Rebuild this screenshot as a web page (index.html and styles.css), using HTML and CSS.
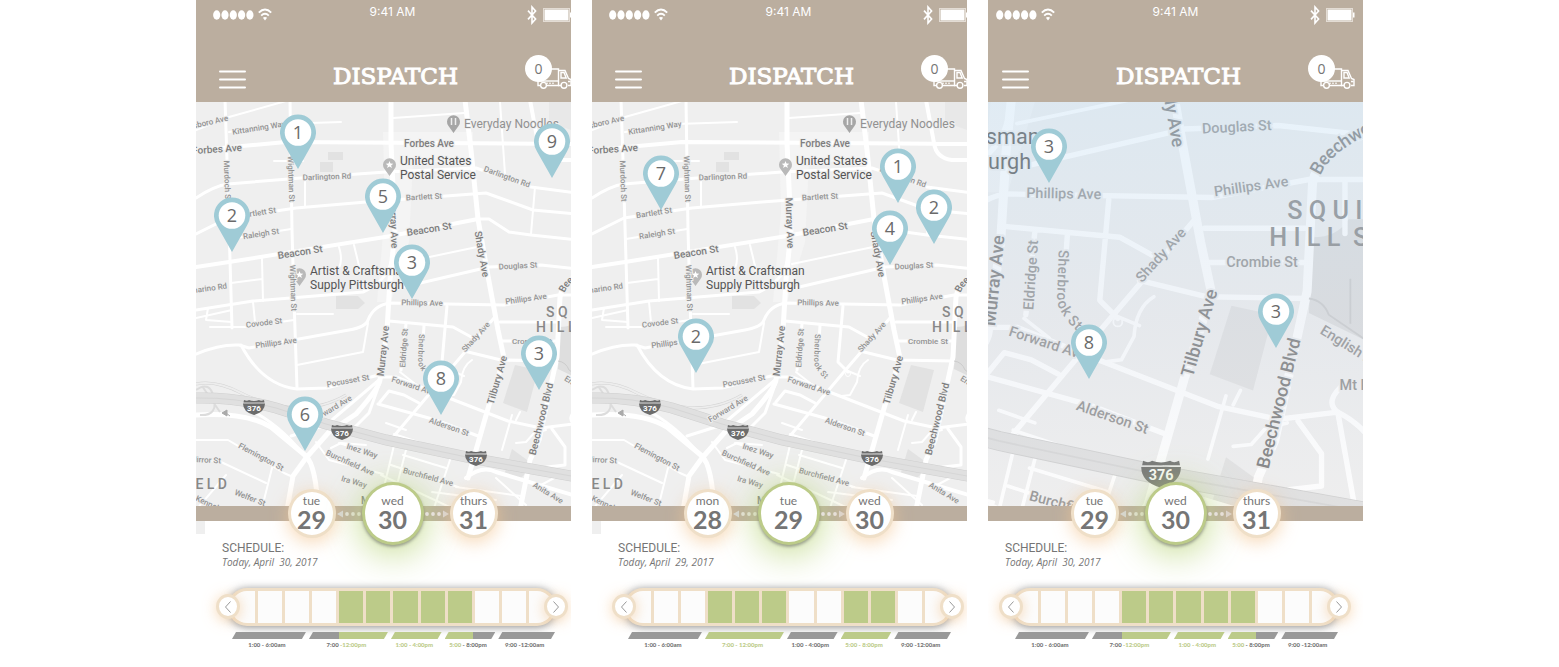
FILE: index.html
```html
<!DOCTYPE html>
<html lang="en">
<head>
<meta charset="utf-8">
<meta name="viewport" content="width=device-width, initial-scale=1">
<title>Dispatch</title>
<link rel="stylesheet" href="styles.css">
</head>
<body>

<!-- Shared icons -->
<svg class="sprite" aria-hidden="true">
  <symbol id="i-signal" viewBox="0 0 41 10"><g fill="#fff"><ellipse cx="3.7" cy="5" rx="3.6" ry="4.7"/><ellipse cx="12" cy="5" rx="3.6" ry="4.7"/><ellipse cx="20.3" cy="5" rx="3.6" ry="4.7"/><ellipse cx="28.6" cy="5" rx="3.6" ry="4.7"/><ellipse cx="36.9" cy="5" rx="3.6" ry="4.7"/></g></symbol>
  <symbol id="i-wifi" viewBox="0 0 14 13"><g fill="none" stroke="#fff" stroke-width="1.9"><path d="M.8 4.6Q7-1.6 13.2 4.6"/><path d="M3.2 7.6Q7 4 10.8 7.6"/></g><path d="M4.900 9.800Q7 8 9.100 9.800L7 12.600z" fill="#fff"/></symbol>
  <symbol id="i-bt" viewBox="0 0 10 20"><path d="M1 5.600L8.600 14 5 18V2l3.600 4L1 14.400" fill="none" stroke="#fff" stroke-width="1.600"/></symbol>
  <symbol id="i-battery" viewBox="0 0 29 14"><rect x=".5" y=".5" width="26" height="13" fill="none" stroke="#e3dcd4"/><rect x="1.5" y="1.5" width="24" height="11" fill="#fff"/><path d="M27 4.500h1.500v5H27z" fill="#fff"/></symbol>
  <symbol id="i-menu" viewBox="0 0 27 19"><path d="M1 1.500h25M1 9.500h25M1 17.500h25" stroke="#fff" stroke-width="2" stroke-linecap="round"/></symbol>
  <symbol id="i-truck" viewBox="0 0 35 21"><g fill="none" stroke="#fff" stroke-width="1.400"><path d="M3 17.500H1V1h20.500v16.500H9.500"/><path d="M1 13h20.500"/><path d="M21.500 2.500h6.500l3.500 8 2.500 1v6h-3"/><path d="M24 4.500h3l2.200 5.500H24z"/><path d="M21 17.500h3M31 13.500h2.500"/><circle cx="6.500" cy="17.300" r="2.900"/><circle cx="27" cy="17.300" r="2.900"/></g><path d="M9 15.200h9" stroke="#fff" stroke-dasharray="2 1"/></symbol>
  <symbol id="i-pin" viewBox="0 0 36 55"><path d="M18 55L3 28.500A18 18 0 1 1 33 28.500z" fill="#9fcbd6"/><circle cx="18" cy="18.500" r="13.300" fill="#fff"/></symbol>
  <symbol id="i-left" viewBox="0 0 24 8"><path d="M0 4l6-3.500v7z" fill="#d9d6d4"/><g fill="#e6e1dc"><circle cx="10" cy="4" r="1.900"/><circle cx="16" cy="4" r="1.900"/><circle cx="22" cy="4" r="1.900"/></g></symbol>
  <symbol id="i-right" viewBox="0 0 24 8"><path d="M24 4l-6-3.500v7z" fill="#d9d6d4"/><g fill="#e6e1dc"><circle cx="2" cy="4" r="1.900"/><circle cx="8" cy="4" r="1.900"/><circle cx="14" cy="4" r="1.900"/></g></symbol>
  <symbol id="i-prev" viewBox="0 0 8 14"><path d="M6.500 1.500L1.500 7l5 5.500" fill="none" stroke="#999"/></symbol>
  <symbol id="i-next" viewBox="0 0 8 14"><path d="M1.500 1.500l5 5.500-5 5.500" fill="none" stroke="#999"/></symbol>
</svg>

<!-- Street map, cloned into every screen with its own view -->
<template id="map-template">
<svg class="map-art" preserveAspectRatio="xMinYMin slice" role="img" aria-label="Street map">
  <rect x="-20" y="90" width="460" height="460" fill="#efefef"/>
  <g fill="#f4f4f4"><path d="M187 132h90v30h-60l-4 80-18 60h-14l8-90z"/></g>
  <g fill="#e2e2e2">
    <path d="M132 152h15v8h-15zM124 162h13v10h-13zM140 296h22l7 7-7 6h-22z"/>
    <path d="M353 102h22v28l-22-8z" fill="#e8e8e8"/>
    <path d="M319 365l23 5-11 42-24-9z"/>
    <path d="M364 327q14 0 20-10h40v70h-25l-37-18z" fill="#dedede"/>
    <path d="M316 449l22 16-14 14-16-4z"/>
  </g>
  <g fill="none" stroke="#fff" stroke-linejoin="round" stroke-linecap="round">
    <g stroke-width="2">
      <path d="M33 132L85 124 145 122M0 130L33 117 90 101M78 161H107M109 179V206M197 118L268 113M304 102L309 174M339 187L335 234M34 239L95 229"/>
      <path d="M143 247Q147 260 143 268M158 245L164 270M200 264L281 247M35 283L66 279M66 259L67 301M0 318L36 310M12 308L10 320 36 322M57 302L59 322M14 327H50L98 320M101 314H137"/>
      <path d="M172 323L167 352 101 365M190 423L210 430M198 434L240 448 262 455M120 442L133 460 187 474M143 443L165 450M200 437L183 508M210 450L195 508M207 455L250 468M195 465L262 487M255 457L238 508"/>
      <path d="M0 440H32L88 473 97 477M0 458L25 462 70 483M76 468L66 508M170 445L145 443 135 448M30 475L0 510M236 492L300 500M260 487L325 496M185 475L260 510"/>
      <path d="M276 360Q266 366 265 382L258 395 250 396M256 371L268 376M316 415L306 450M320 443L330 442 338 433 350 430M204 372L218 383M320 420L324 412M345 485L362 476M300 478L330 505"/>
      <circle cx="256" cy="374" r="2.500" stroke-width="1"/>
    </g>
    <g stroke-width="3">
      <path d="M29 100L31 160 34 260 36 328M94 100L96 230 98 300 101 388"/>
      <path d="M0 198Q18 186 32 184L105 178 190 172 280 168 335 187 380 193M0 234L32 218 100 208 170 202 290 193 337 210 380 214"/>
      <path d="M282 219H293L313 232 335 235 400 242M203 288L293 267 345 265 400 271M0 310L57 301 167 292Q190 282 195 262"/>
      <path d="M0 354Q24 344 43 345L53 348 153 330Q170 327 172 320 178 305 194 303L308 305 362 295H400M382 295V325"/>
      <path d="M45 345Q66 385 101 389L130 388 183 375M193 321L257 327 277 338M268 351L305 360 361 361M251 306L246 362 256 372M298 318L251 373 198 436M210 324L205 370M228 326L227 340M305 341H361M304 322H361"/>
      <path d="M183 377H200L240 393 312 421 345 428 378 424Q400 435 405 460M184 402L193 391 208 395 223 403M182 404L240 420 282 436M378 424Q370 418 382 408M356 429L369 447V465L351 467M378 424L388 480"/>
      <path d="M183 380L130 425 95 436M183 385L173 413 158 428"/>
    </g>
    <g stroke-width="4">
      <path d="M-5 151L46 146 90 142 380 144M334 100L342 143Q344 158 360 160H400M270 478Q286 465 300 472L380 496 400 500"/>
      <path d="M0 267L33 262 195 236 282 219"/>
    </g>
    <g stroke-width="5">
      <path d="M195 100V143L199 230 194 280 191 330 184 380Q183 388 160 414L133 432 110 458 97 476 91 510"/>
      <path d="M269 100L275 150 282 219 292 276 302 330 308 358 293 405 272 478"/>
      <path d="M400 268Q368 276 364 297L361 357 343 440 334 460 324 510"/>
      <path d="M0 415Q50 412 75 427L110 456Q120 466 122 510"/>
      <path d="M60 413Q90 430 113 462" stroke-width="3"/>
    </g>
  </g>
  <g fill="none">
    <path d="M0 384Q20 380 45 393T100 408Q128 408 150 395" stroke="#d3d3d3" stroke-width="3"/>
    <path d="M0 384Q20 380 45 393T100 408Q128 408 150 395" stroke="#ededed" stroke-width="2"/>
    <path d="M0 390Q14 380 18 398T4 415M6 386L24 412" stroke="#dcdcdc" stroke-width="2"/>
    <path d="M0 398Q40 397 80 408L130 424 190 440 280 459 420 484" stroke="#cfcfcf" stroke-width="11"/>
    <path d="M0 398Q40 397 80 408L130 424 190 440 280 459 420 484" stroke="#e0e0e0" stroke-width="10"/>
    <path d="M0 398Q40 397 80 408L130 424 190 440 280 459 420 484" stroke="#d6d6d6"/>
    <path d="M362 361Q370 362 373 370L395 385M385 350V375" stroke="#ccc"/>
    <path d="M26 413l5-3v6zM30 413l4 3" stroke="#aaa" fill="#aaa"/>
  </g>

  <g fill="#b9b9b9">
    <path d="M257.500 133l-5-7a6.500 6.500 0 1 1 10 0z" fill="#a6a6a6"/><path d="M255.500 118v7M259.500 118v7" stroke="#eee" stroke-width="1.500"/>
    <path d="M193.500 176l-5-7a6.500 6.500 0 1 1 10 0z"/><path d="M103.500 286l-5-7a6.500 6.500 0 1 1 10 0z"/>
    <path fill="#fff" d="M193.500 161l1 2.600 2.800.1-2.200 1.700.8 2.700-2.400-1.600-2.400 1.600.8-2.700-2.200-1.700 2.800-.1z"/>
    <path fill="#fff" d="M103.500 271l1 2.600 2.800.1-2.200 1.700.8 2.700-2.400-1.600-2.400 1.600.8-2.700-2.200-1.700 2.800-.1z"/>
  </g>

  <g class="street">
    <text class="end" transform="translate(32 118) rotate(-13)">Hillsboro Ave</text>
    <text transform="translate(63 128) rotate(-9)">Kittanning Way</text>
    <text transform="translate(131 177) rotate(-2)">Darlington Rd</text>
    <text transform="translate(311 177) rotate(20)">Darlington Rd</text>
    <text transform="translate(31 181) rotate(88)">Murdoch St</text>
    <text transform="translate(95 179) rotate(88)">Wightman St</text>
    <text transform="translate(97 288) rotate(88)">Wightman St</text>
    <text transform="translate(62 213) rotate(-9)">Bartlett St</text>
    <text transform="translate(228 197) rotate(-3)">Bartlett St</text>
    <text transform="translate(65 234) rotate(-9)">Raleigh St</text>
    <text transform="translate(322 266) rotate(-3)">Douglas St</text>
    <text class="end" transform="translate(31 286) rotate(-8)">Camarino Rd</text>
    <text transform="translate(226 303) rotate(1)">Phillips Ave</text>
    <text transform="translate(330 299) rotate(-8)">Phillips Ave</text>
    <text transform="translate(68 323) rotate(-7)">Covode St</text>
    <text transform="translate(80 343) rotate(-8)">Phillips Ave</text>
    <text transform="translate(208 348) rotate(-86)">Eldridge St</text>
    <path id="sherbrook" d="M226 334L225 362Q227 371 241 382" fill="none" stroke="none"/>
    <text class="start"><textPath href="#sherbrook">Sherbrook St</textPath></text>
    <text transform="translate(280 337) rotate(-48)">Shady Ave</text>
    <text transform="translate(336 341)">Crombie St</text>
    <text class="start" transform="translate(369 378) rotate(32)">English Ln</text>
    <text class="start" transform="translate(379 409)">Mt Royal Rd</text>
    <text transform="translate(152 381) rotate(-10)">Pocusset St</text>
    <text transform="translate(217 386) rotate(18)">Forward Ave</text>
    <text transform="translate(136 409) rotate(-31)">Forward Ave</text>
    <text transform="translate(253 427) rotate(19)">Alderson St</text>
    <text transform="translate(166 451) rotate(18)">Inez Way</text>
    <text transform="translate(154 463) rotate(24)">Burchfield Ave</text>
    <text transform="translate(232 477) rotate(15)">Burchfield Ave</text>
    <text transform="translate(158 482) rotate(16)">Ira Way</text>
    <text transform="translate(352 493) rotate(31)">Anita Ave</text>
    <text transform="translate(65 457) rotate(28)">Flemington St</text>
    <text class="end" transform="translate(25 461) rotate(3)">Mirror St</text>
    <text transform="translate(54 498) rotate(21)">Welfer St</text>
    <text class="start" transform="translate(0 498) rotate(25)">Kennebec St</text>
  </g>
  <g class="avenue">
    <text transform="translate(21 149) rotate(-4)">Forbes Ave</text>
    <text transform="translate(233 143)">Forbes Ave</text>
    <text transform="translate(104 252) rotate(-9)">Beacon St</text>
    <text transform="translate(233 229) rotate(-9)">Beacon St</text>
    <text transform="translate(198 223) rotate(88)">Murray Ave</text>
    <text transform="translate(187 351) rotate(-84)">Murray Ave</text>
    <text transform="translate(286 254) rotate(80)">Shady Ave</text>
    <text transform="translate(301 380) rotate(-74)">Tilbury Ave</text>
    <text transform="translate(345 419) rotate(-76)">Beechwood Blvd</text>
    <path id="beechwood" d="M365 291Q371 276 402 262" fill="none" stroke="none"/>
    <text class="start"><textPath href="#beechwood">Beechwood</textPath></text>
    <text class="start" transform="translate(165 500)">Monitor St</text>
  </g>
  <g class="poi">
    <text class="food" x="268" y="124">Everyday Noodles</text>
    <text x="204" y="161">United States</text><text x="204" y="175">Postal Service</text>
    <text x="114" y="271">Artist &amp; Craftsman</text><text x="114" y="285">Supply Pittsburgh</text>
  </g>
  <g class="district">
    <text x="350" y="312">S Q U I R R E L</text><text x="340" y="327">H I L L&#160; S O U T H</text>
    <text class="end" x="31" y="484">F I E L D</text>
  </g>
  <g class="shield">
    <g transform="translate(58 407)"><path d="M-10-7q3 1.500 5 0 5 2 10 0 2 1.500 5 0l.5 2.500h-21z"/><path d="M-11-3.500h22q0 8.500-11 11.500Q-11 5-11-3.500z"/><text y="1">376</text></g>
    <g transform="translate(146 432)"><path d="M-10-7q3 1.500 5 0 5 2 10 0 2 1.500 5 0l.5 2.500h-21z"/><path d="M-11-3.500h22q0 8.500-11 11.500Q-11 5-11-3.500z"/><text y="1">376</text></g>
    <g transform="translate(280 458)"><path d="M-10-7q3 1.500 5 0 5 2 10 0 2 1.500 5 0l.5 2.500h-21z"/><path d="M-11-3.500h22q0 8.500-11 11.500Q-11 5-11-3.500z"/><text y="1">376</text></g>
  </g>
</svg>
</template>

<main class="screens">

  <section class="screen screen-inset">
    <header class="top">
      <div class="status">
        <div class="status-left"><svg class="signal"><use href="#i-signal"/></svg><svg class="wifi"><use href="#i-wifi"/></svg></div>
        <time class="clock">9:41 AM</time>
        <div class="status-right"><svg class="bt"><use href="#i-bt"/></svg><svg class="battery"><use href="#i-battery"/></svg></div>
      </div>
      <div class="bar">
        <button class="menu" aria-label="Menu"><svg><use href="#i-menu"/></svg></button>
        <h1 class="title">DISPATCH</h1>
        <button class="trucks" aria-label="Trucks"><svg><use href="#i-truck"/></svg><span class="badge">0</span></button>
      </div>
    </header>
    <div class="map" data-view="0 102 375 432">
      <button class="pin" style="left:102px;top:12px"><svg><use href="#i-pin"/></svg><span>1</span></button>
      <button class="pin" style="left:356px;top:21px"><svg><use href="#i-pin"/></svg><span>9</span></button>
      <button class="pin" style="left:187px;top:76px"><svg><use href="#i-pin"/></svg><span>5</span></button>
      <button class="pin" style="left:36px;top:95px"><svg><use href="#i-pin"/></svg><span>2</span></button>
      <button class="pin" style="left:216px;top:142px"><svg><use href="#i-pin"/></svg><span>3</span></button>
      <button class="pin" style="left:343px;top:233px"><svg><use href="#i-pin"/></svg><span>3</span></button>
      <button class="pin" style="left:245px;top:258px"><svg><use href="#i-pin"/></svg><span>8</span></button>
      <button class="pin" style="left:109px;top:294px"><svg><use href="#i-pin"/></svg><span>6</span></button>
    </div>
    <nav class="dates" aria-label="Day">
      <button class="day"><span class="name">tue</span><span class="num">29</span></button>
      <svg class="dots"><use href="#i-left"/></svg>
      <button class="day current"><span class="name">wed</span><span class="num">30</span></button>
      <svg class="dots"><use href="#i-right"/></svg>
      <button class="day"><span class="name">thurs</span><span class="num">31</span></button>
    </nav>
    <div class="panel">
      <h2 class="heading">SCHEDULE:</h2>
      <p class="today">Today, April&#160; 30, 2017</p>
      <div class="timeline">
        <button class="step" aria-label="Earlier"><svg><use href="#i-prev"/></svg></button>
        <div class="slots"><i></i><i></i><i></i><i></i><i class="on"></i><i class="on"></i><i class="on"></i><i class="on"></i><i class="on"></i><i></i><i></i><i></i></div>
        <button class="step" aria-label="Later"><svg><use href="#i-next"/></svg></button>
      </div>
      <ul class="ranges">
        <li><b></b>1:00 - 6:00am</li>
        <li><b class="from"></b><span>7:00 <em>-12:00pm</em></span></li>
        <li><b class="on"></b><em>1:00 - 4:00pm</em></li>
        <li><b class="until"></b><span><em>5:00</em> - 8:00pm</span></li>
        <li><b></b>9:00 -12:00am</li>
      </ul>
    </div>
  </section>

  <section class="screen screen-inset">
    <header class="top">
      <div class="status">
        <div class="status-left"><svg class="signal"><use href="#i-signal"/></svg><svg class="wifi"><use href="#i-wifi"/></svg></div>
        <time class="clock">9:41 AM</time>
        <div class="status-right"><svg class="bt"><use href="#i-bt"/></svg><svg class="battery"><use href="#i-battery"/></svg></div>
      </div>
      <div class="bar">
        <button class="menu" aria-label="Menu"><svg><use href="#i-menu"/></svg></button>
        <h1 class="title">DISPATCH</h1>
        <button class="trucks" aria-label="Trucks"><svg><use href="#i-truck"/></svg><span class="badge">0</span></button>
      </div>
    </header>
    <div class="map" data-view="0 102 375 432">
      <button class="pin" style="left:69px;top:53px"><svg><use href="#i-pin"/></svg><span>7</span></button>
      <button class="pin" style="left:306px;top:46px"><svg><use href="#i-pin"/></svg><span>1</span></button>
      <button class="pin" style="left:342px;top:87px"><svg><use href="#i-pin"/></svg><span>2</span></button>
      <button class="pin" style="left:298px;top:108px"><svg><use href="#i-pin"/></svg><span>4</span></button>
      <button class="pin" style="left:104px;top:216px"><svg><use href="#i-pin"/></svg><span>2</span></button>
    </div>
    <nav class="dates" aria-label="Day">
      <button class="day"><span class="name">mon</span><span class="num">28</span></button>
      <svg class="dots"><use href="#i-left"/></svg>
      <button class="day current"><span class="name">tue</span><span class="num">29</span></button>
      <svg class="dots"><use href="#i-right"/></svg>
      <button class="day"><span class="name">wed</span><span class="num">30</span></button>
    </nav>
    <div class="panel">
      <h2 class="heading">SCHEDULE:</h2>
      <p class="today">Today, April&#160; 29, 2017</p>
      <div class="timeline">
        <button class="step" aria-label="Earlier"><svg><use href="#i-prev"/></svg></button>
        <div class="slots"><i></i><i></i><i></i><i class="on"></i><i class="on"></i><i class="on"></i><i></i><i></i><i class="on"></i><i class="on"></i><i></i><i></i></div>
        <button class="step" aria-label="Later"><svg><use href="#i-next"/></svg></button>
      </div>
      <ul class="ranges">
        <li><b></b>1:00 - 6:00am</li>
        <li><b class="on"></b><em>7:00 - 12:00pm</em></li>
        <li><b></b>1:00 - 4:00pm</li>
        <li><b class="on"></b><em>5:00 - 8:00pm</em></li>
        <li><b></b>9:00 -12:00am</li>
      </ul>
    </div>
  </section>

  <section class="screen">
    <header class="top">
      <div class="status">
        <div class="status-left"><svg class="signal"><use href="#i-signal"/></svg><svg class="wifi"><use href="#i-wifi"/></svg></div>
        <time class="clock">9:41 AM</time>
        <div class="status-right"><svg class="bt"><use href="#i-bt"/></svg><svg class="battery"><use href="#i-battery"/></svg></div>
      </div>
      <div class="bar">
        <button class="menu" aria-label="Menu"><svg><use href="#i-menu"/></svg></button>
        <h1 class="title">DISPATCH</h1>
        <button class="trucks" aria-label="Trucks"><svg><use href="#i-truck"/></svg><span class="badge">0</span></button>
      </div>
    </header>
    <div class="map map-tinted" data-view="184 252 208 240">
      <button class="pin" style="left:61px;top:26px"><svg><use href="#i-pin"/></svg><span>3</span></button>
      <button class="pin" style="left:288px;top:191px"><svg><use href="#i-pin"/></svg><span>3</span></button>
      <button class="pin" style="left:101px;top:222px"><svg><use href="#i-pin"/></svg><span>8</span></button>
    </div>
    <nav class="dates" aria-label="Day">
      <button class="day"><span class="name">tue</span><span class="num">29</span></button>
      <svg class="dots"><use href="#i-left"/></svg>
      <button class="day current"><span class="name">wed</span><span class="num">30</span></button>
      <svg class="dots"><use href="#i-right"/></svg>
      <button class="day"><span class="name">thurs</span><span class="num">31</span></button>
    </nav>
    <div class="panel">
      <h2 class="heading">SCHEDULE:</h2>
      <p class="today">Today, April&#160; 30, 2017</p>
      <div class="timeline">
        <button class="step" aria-label="Earlier"><svg><use href="#i-prev"/></svg></button>
        <div class="slots"><i></i><i></i><i></i><i></i><i class="on"></i><i class="on"></i><i class="on"></i><i class="on"></i><i class="on"></i><i></i><i></i><i></i></div>
        <button class="step" aria-label="Later"><svg><use href="#i-next"/></svg></button>
      </div>
      <ul class="ranges">
        <li><b></b>1:00 - 6:00am</li>
        <li><b class="from"></b><span>7:00 <em>-12:00pm</em></span></li>
        <li><b class="on"></b><em>1:00 - 4:00pm</em></li>
        <li><b class="until"></b><span><em>5:00</em> - 8:00pm</span></li>
        <li><b></b>9:00 -12:00am</li>
      </ul>
    </div>
  </section>

</main>
<script src="map.js"></script>
</body>
</html>
```

FILE: styles.css
```css
* { box-sizing: border-box; }

body {
  margin: 0;
  background: #fff;
  color: #757575;
  font-family: Lato, "Open Sans", sans-serif;
}

button {
  margin: 0;
  padding: 0;
  border: 0;
  background: none;
  color: inherit;
  font: inherit;
  cursor: pointer;
}

svg { display: block; }
.sprite { position: absolute; width: 0; height: 0; }

.screens {
  display: grid;
  grid-template-columns: repeat(3, minmax(0, 375px));
  justify-content: center;
  gap: 21px;
}

.screen {
  --inset: 0px;
  display: flex;
  flex-direction: column;
  overflow: hidden;
}
.screen-inset { --inset: 9px; }

/* Header */
.top {
  width: calc(100% + var(--inset));
  padding: 4px 0 13px var(--inset);
  background: #bbae9f;
  color: #fff;
}
.status {
  display: grid;
  grid-template-columns: 1fr auto 1fr;
  align-items: center;
  height: 21px;
  padding: 0 8px;
}
.status-left { display: flex; align-items: center; gap: 4px; }
.status-right { display: flex; align-items: center; justify-content: flex-end; gap: 6px; }
.signal { width: 41px; height: 10px; }
.wifi { width: 14px; height: 13px; }
.bt { width: 10px; height: 20px; }
.battery { width: 29px; height: 14px; }
.clock { align-self: start; font: 12px/16px Inter, sans-serif; }

.bar {
  display: grid;
  grid-template-columns: 1fr auto 1fr;
  align-items: end;
  height: 64px;
  padding: 0 8px 0 14px;
}
.menu { justify-self: start; }
.menu svg { width: 27px; height: 19px; }
.title {
  margin: 0;
  font: 400 23px/25px "DejaVu Serif", serif;
  -webkit-text-stroke: 1px #fff;
}
.trucks {
  position: relative;
  display: flex;
  align-items: flex-end;
  justify-content: flex-end;
  justify-self: end;
  width: 47px;
  height: 34px;
}
.trucks svg { width: 35px; height: 21px; }
.badge {
  position: absolute;
  top: 0;
  left: 0;
  width: 27px;
  height: 27px;
  border-radius: 50%;
  background: #fff;
  color: #757575;
  font: 14px/27px "Open Sans", sans-serif;
  text-align: center;
}

/* Map */
.map {
  position: relative;
  height: 432px;
  margin-bottom: -28px;
  overflow: hidden;
  background: #efefef;
}
.map-art { width: 100%; height: 100%; }
.map-tinted::after {
  content: "";
  position: absolute;
  inset: 0;
  background: linear-gradient(rgba(188, 219, 243, 0.35), rgba(200, 212, 228, 0.25) 50%, rgba(225, 225, 230, 0.1) 90%);
}
.map text { font-family: Roboto, sans-serif; dominant-baseline: central; text-anchor: middle; }
.map text.start { text-anchor: start; }
.map text.end { text-anchor: end; }
.street text { font-size: 8px; font-weight: 500; fill: #939393; stroke: #efefef; stroke-width: 2px; paint-order: stroke; }
.avenue text { font-size: 10px; font-weight: 500; fill: #7d7d7d; stroke: #efefef; stroke-width: 2px; paint-order: stroke; }
.map .poi text { font-size: 12px; fill: #555; text-anchor: start; stroke: #efefef; stroke-width: 2px; paint-order: stroke; }
.map .poi text.food { fill: #919191; }
.map .district text { font-size: 14px; font-weight: 500; fill: #888; text-anchor: start; white-space: pre; }
.map .district text.end { text-anchor: end; }
.shield path { fill: #6c6c6c; }
.shield text { font-size: 8px; font-weight: 700; fill: #fff; }

.pin {
  position: absolute;
  z-index: 1;
  width: 36px;
  height: 55px;
  margin-left: -18px;
}
.pin svg { width: 36px; height: 55px; }
.pin span {
  position: absolute;
  inset: 0 0 auto;
  color: #6a6a6a;
  font: 18px/36px "Open Sans", sans-serif;
  text-align: center;
}

/* Day picker */
.dates {
  position: relative;
  z-index: 2;
  display: flex;
  flex: none;
  align-items: center;
  justify-content: center;
  gap: 1px;
  width: calc(100% + var(--inset));
  height: 15px;
  padding-left: var(--inset);
  background: #bbae9f;
}
.day {
  display: flex;
  flex: none;
  flex-direction: column;
  align-items: center;
  justify-content: center;
  width: 48px;
  height: 49px;
  padding-bottom: 3px;
  border: 3px solid #efdfc8;
  border-radius: 50%;
  background: #fff;
  box-shadow: 0 4px 18px rgba(244, 200, 150, 0.7);
}
.day.current {
  width: 62px;
  height: 63px;
  border-color: #bccb89;
  box-shadow: 0 2px 3px rgba(90, 90, 90, 0.5), 0 6px 34px 4px rgba(190, 215, 130, 0.8);
}
.name { font-size: 12px; line-height: 14px; }
.num { font-size: 25px; font-weight: 700; line-height: 22px; }
.dots { flex: none; width: 24px; height: 8px; }

/* Schedule */
.panel {
  position: relative;
  z-index: 1;
  margin: 0 calc(-1 * var(--inset)) 0 var(--inset);
  padding: 20px 12px 17px 11px;
  background: #fff;
}
.heading {
  margin: 0 0 0 6px;
  font: 400 12px/14px Roboto, sans-serif;
}
.today {
  margin: 0 0 18px 6px;
  font: italic 10px/15px "Open Sans", sans-serif;
}
.timeline { display: flex; align-items: center; height: 37px; }
.step {
  position: relative;
  display: grid;
  flex: none;
  place-items: center;
  width: 24px;
  height: 25px;
  border: 3px solid #efdfc8;
  border-radius: 50%;
  background: #fff;
  box-shadow: 0 2px 14px rgba(244, 200, 150, 0.7);
}
.step svg { width: 8px; height: 14px; }
.slots {
  display: flex;
  flex: 1;
  gap: 3px;
  height: 38px;
  margin: 0 -12px;
  padding: 3px;
  border-radius: 19px;
  background: #efdfc8;
  box-shadow: 0 1px 8px rgba(60, 60, 60, 0.6);
}
.slots i { flex: 1; background: #fcfcfc; }
.slots i:first-child { border-radius: 16px 0 0 16px; }
.slots i:last-child { border-radius: 0 16px 16px 0; }
.slots .on { background: #bccb89; }

.ranges {
  display: grid;
  grid-template-columns: 73fr 78fr 50fr 50fr 56fr;
  gap: 3px;
  margin: 7px 13px 0 16px;
  padding: 0;
  list-style: none;
  font-size: 6px;
  font-weight: 900;
  line-height: 11px;
  text-align: center;
  white-space: nowrap;
}
.ranges li { padding-right: 4px; }
.ranges b {
  display: block;
  height: 7px;
  margin-right: -4px;
  background: #999;
  clip-path: polygon(4px 0, 100% 0, calc(100% - 4px) 100%, 0 100%);
}
.ranges b.on { background: #bccb89; }
.ranges b.from { background: linear-gradient(90deg, #999 38%, #bccb89 38%); }
.ranges b.until { background: linear-gradient(90deg, #bccb89 56%, #999 56%); }
.ranges em { color: #bccb89; font-style: normal; }
```

FILE: map.js
```js
// Each screen shows the same street map through its own view box.
const art = document.getElementById("map-template").content.firstElementChild;
document.querySelectorAll(".map").forEach((map, n) => {
  const svg = art.cloneNode(true);
  svg.setAttribute("viewBox", map.dataset.view);
  svg.querySelectorAll("[id]").forEach((el) => { el.id += n; });
  svg.querySelectorAll("textPath").forEach((el) => {
    el.setAttribute("href", el.getAttribute("href") + n);
  });
  map.prepend(svg);
});
```
